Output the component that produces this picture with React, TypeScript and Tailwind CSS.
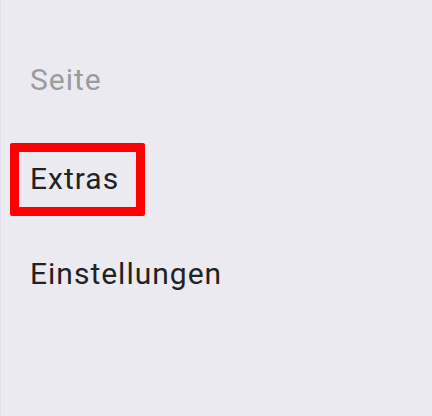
export default function App() {
  return (
    <main className="w-[432px] h-[416px] bg-[#ebeaf0] border-l border-[#dfe2ec] overflow-hidden font-['Roboto',sans-serif]">
      <div className="flex flex-col pl-[29px] pt-[62px] text-[30px] leading-[35px] tracking-[1px]">
        <div className="text-[#9b9b9d]">Seite</div>
        <div className="relative mt-[64px] text-[#222224]">
          Extras
          <div className="absolute left-[-20px] top-[-18px] w-[135px] h-[73px] border-[9px] border-[#ff0000] rounded-[2px] pointer-events-none" />
        </div>
        <div className="mt-[60px] text-[#222224]">Einstellungen</div>
      </div>
    </main>
  );
}
